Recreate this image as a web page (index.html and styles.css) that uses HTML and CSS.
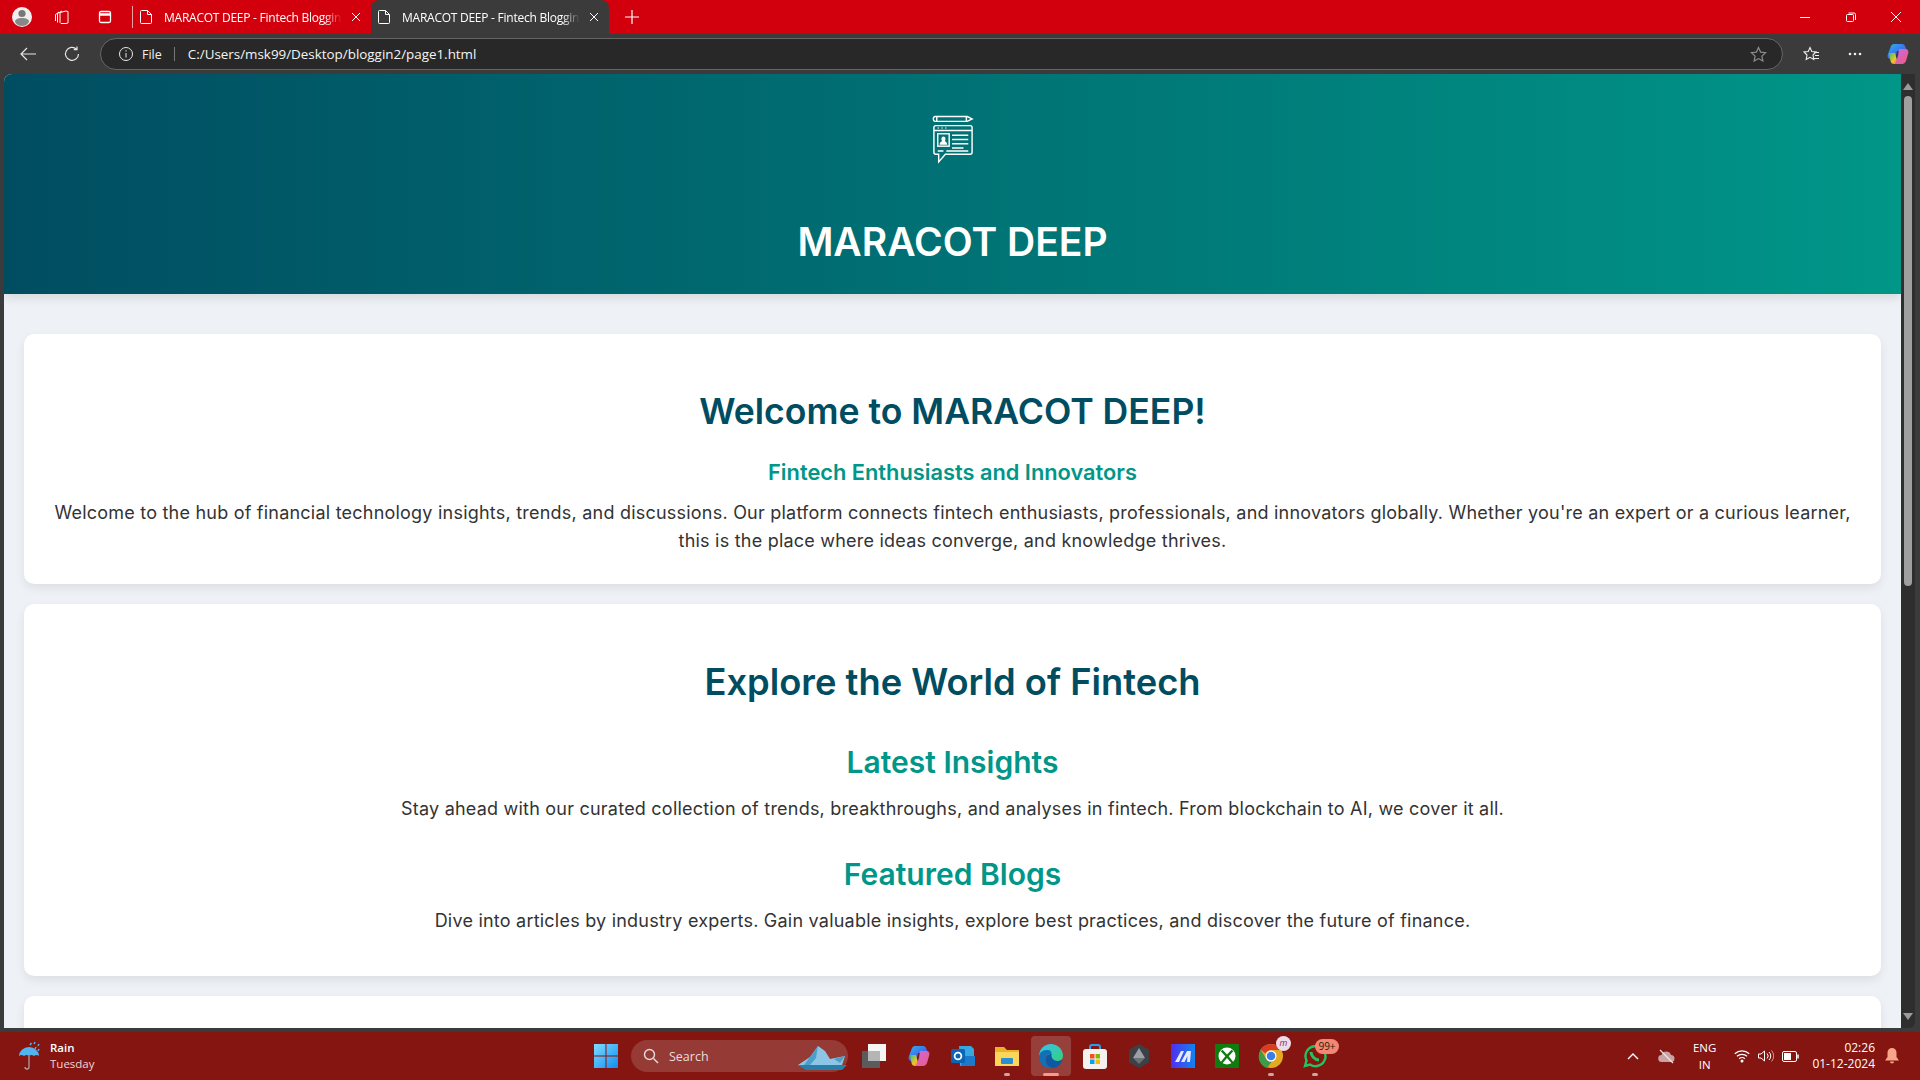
FILE: index.html
```html
<!DOCTYPE html>
<html lang="en">
<head>
<meta charset="utf-8">
<title>MARACOT DEEP - Fintech Blogging</title>
<link rel="stylesheet" href="styles.css">
</head>
<body>
<div class="tabstrip">
  <div class="avatar"><svg width="28" height="28" viewBox="0 0 28 28"><circle cx="14" cy="14" r="10" fill="#f1eeee"/><circle cx="14" cy="10.5" r="3.6" fill="#777"/><path d="M7 19c0-3 3-4 7-4s7 1 7 4c-2 3-4 4-7 4s-5-1-7-4z" fill="#888"/></svg></div>
  <svg class="ticon t-coll" width="18" height="18" viewBox="0 0 18 18" fill="none" stroke="#fff"><path d="M7 4.500l6-1.500 2 .5v11.500l-2 .5H8l-1-1z"/><path d="M4.500 14.500V5.500L9 3M2.500 13V6.500L6 4"/></svg>
  <svg class="ticon t-vert" width="16" height="16" viewBox="0 0 16 16" fill="none" stroke="#fff" stroke-width="1.300"><rect x="2.500" y="2.500" width="11" height="11" rx="1.500"/><path d="M2.500 5.500h11" stroke-width="2.500"/></svg>
  <span class="tabsep"></span>
  <div class="tab">
    <svg class="docicon" width="12" height="14" viewBox="0 0 12 14" fill="none" stroke="#fff"><path d="M1.500.500h6l4 4v8a1 1 0 0 1-1 1h-9a1 1 0 0 1-1-1v-11a1 1 0 0 1 1-1zM7.500.500v4h4"/></svg>
    <span class="tabtitle">MARACOT DEEP - Fintech Bloggin</span>
    <svg class="tabx" width="10" height="10" viewBox="0 0 10 10" stroke="#fff"><path d="M1 1l8 8M9 1l-8 8"/></svg>
  </div>
  <div class="tab active">
    <svg class="docicon" width="12" height="14" viewBox="0 0 12 14" fill="none" stroke="#fff"><path d="M1.500.500h6l4 4v8a1 1 0 0 1-1 1h-9a1 1 0 0 1-1-1v-11a1 1 0 0 1 1-1zM7.500.500v4h4"/></svg>
    <span class="tabtitle">MARACOT DEEP - Fintech Bloggin</span>
    <svg class="tabx" width="10" height="10" viewBox="0 0 10 10" stroke="#fff"><path d="M1 1l8 8M9 1l-8 8"/></svg>
  </div>
  <svg class="newtab" width="14" height="14" viewBox="0 0 14 14" stroke="#fff" stroke-width="1.200"><path d="M7 0v14M0 7h14"/></svg>
  <div class="winctrl">
    <svg width="10" height="10" viewBox="0 0 10 10" stroke="#fff"><path d="M0 5.500h10"/></svg>
    <svg width="10" height="10" viewBox="0 0 10 10" fill="none" stroke="#fff"><rect x=".5" y="2.500" width="7" height="7" rx="1"/><path d="M2.500 1h5.500a1.500 1.500 0 0 1 1.500 1.500V8"/></svg>
    <svg width="10" height="10" viewBox="0 0 10 10" stroke="#fff"><path d="M0 0l10 10M10 0L0 10"/></svg>
  </div>
</div>
<div class="toolbar">
  <svg class="navicon nav-back" width="16" height="14" viewBox="0 0 16 14" fill="none" stroke="#e8e8e8" stroke-width="1.200"><path d="M16 7H1M7 1L1 7l6 6"/></svg>
  <svg class="navicon nav-reload" width="16" height="16" viewBox="0 0 16 16" fill="none" stroke="#e8e8e8" stroke-width="1.200"><path d="M12.500 3.200A6.500 6.500 0 1 0 14.500 8M13 .5v3.200H9.800"/></svg>
  <div class="addressbar">
    <svg width="16" height="16" viewBox="0 0 16 16" fill="none" stroke="#e8e8e8"><circle cx="8" cy="8" r="6.500"/><path d="M8 7v4.500M8 4.200v1.300"/></svg>
    <span class="scheme">File</span>
    <span class="addrsep"></span>
    <span class="url">C:/Users/msk99/Desktop/bloggin2/page1.html</span>
    <svg class="star" width="17" height="17" viewBox="0 0 17 17" fill="none" stroke="#8c8c8c" stroke-width="1.200"><path d="M8.500 1.500l2.100 4.600 5 .6-3.700 3.400 1 5-4.400-2.500-4.400 2.500 1-5L1.400 6.700l5-.6z"/></svg>
  </div>
  <svg class="favs" width="17" height="17" viewBox="0 0 17 17" fill="none" stroke="#f0f0f0" stroke-width="1.100"><path d="M7 1.500l1.800 4 4.200.5-3 3 .8 4.500L7 11.300 3.200 13.500 4 9 1 6l4.200-.5zM11 6.500h5M12 9.500h4M11 12.500h5"/></svg>
  <svg class="dots" width="14" height="4" viewBox="0 0 14 4" fill="#f0f0f0"><circle cx="2" cy="2" r="1.300"/><circle cx="7" cy="2" r="1.300"/><circle cx="12" cy="2" r="1.300"/></svg>
  <svg class="copilot" width="24" height="24" viewBox="0 0 24 24"><defs><linearGradient id="cpa" x1="0" y1="0" x2="1" y2="1"><stop offset="0" stop-color="#2fb5e8"/><stop offset=".55" stop-color="#3b6ff0"/><stop offset="1" stop-color="#8a4de8"/></linearGradient><linearGradient id="cpb" x1="0" y1="0" x2="1" y2="1"><stop offset="0" stop-color="#35c26b"/><stop offset=".6" stop-color="#f2c230"/><stop offset="1" stop-color="#f06a3a"/></linearGradient><linearGradient id="cpc" x1="0" y1="0" x2="1" y2="1"><stop offset="0" stop-color="#c86ae8"/><stop offset="1" stop-color="#f05a7a"/></linearGradient></defs><path d="M8 2h8c2 0 2.500 1 3 2l2 5H11l-2 8H5c-3 0-4-2-3-5l3-8c.5-1 1.500-2 3-2z" fill="url(#cpa)"/><path d="M3 11h6l3 11H8c-2 0-3-1-3.500-3z" fill="url(#cpb)"/><path d="M13 7h6c3 0 4 2 3 5l-2 7c-1 2-2 3-4 3H9l3-8z" fill="url(#cpc)"/></svg>
</div>
<div class="viewport">
  <div class="page">
    <header class="site-header">
      <svg class="logo" width="42" height="50" viewBox="0 0 44 52" fill="none" stroke="#fff" stroke-width="1.500">
        <path d="M3 2.500h34l5 2.500-5 2.500H3a2 2 0 0 1-1.500-2.500A2 2 0 0 1 3 2.500zM5 2.500v5M36 2.500v5"/>
        <path d="M4 12h36a2 2 0 0 1 2 2v26a2 2 0 0 1-2 2H14l-7 8v-8H4a2 2 0 0 1-2-2V14a2 2 0 0 1 2-2z"/>
        <path d="M2 17h40"/>
        <path d="M6 14.500h1M10 14.500h1M14 14.500h1"/>
        <rect x="6" y="20.500" width="12" height="13"/>
        <path d="M8 32c0-3 2-3 2.500-4-1-1-1-4.500 1.500-4.500s2.500 3.500 1.500 4.500c.5 1 2.500 1 2.500 4z" fill="#fff" stroke="none"/>
        <path d="M21 22h17M21 26.500h17M21 31h17M21 35.500h12M6 38.500h6M15 38.500h23"/>
      </svg>
      <div class="brand">MARACOT DEEP</div>
    </header>
    <main class="content">
      <section class="card card-welcome">
        <h1>Welcome to MARACOT DEEP!</h1>
        <h3>Fintech Enthusiasts and Innovators</h3>
        <p>Welcome to the hub of financial technology insights, trends, and discussions. Our platform connects fintech enthusiasts, professionals, and innovators globally. Whether you're an expert or a curious learner, this is the place where ideas converge, and knowledge thrives.</p>
      </section>
      <section class="card card-explore">
        <h1>Explore the World of Fintech</h1>
        <h2>Latest Insights</h2>
        <p>Stay ahead with our curated collection of trends, breakthroughs, and analyses in fintech. From blockchain to AI, we cover it all.</p>
        <h2>Featured Blogs</h2>
        <p>Dive into articles by industry experts. Gain valuable insights, explore best practices, and discover the future of finance.</p>
      </section>
      <section class="card card-next"></section>
    </main>
  </div>
  <div class="scrollbar">
    <span class="arrow-up"></span>
    <span class="thumb"></span>
    <span class="arrow-down"></span>
  </div>
</div>
<footer class="taskbar">
  <div class="weather">
    <svg width="26" height="30" viewBox="0 0 26 30"><path d="M1 15a10 9 0 0 1 20 0c-2-1.500-3-1.500-5 0-2-1.500-3-1.500-5 0-2-1.500-3-1.500-5 0-2-1.500-3-1.500-5 0z" fill="#54b4ee"/><path d="M11 15v11a2 2 0 0 1-4 0" fill="none" stroke="#a9a0a0" stroke-width="1.300"/><path d="M12 4l1.500-2M16 3l1-2M20 5l1-2M20 10l1-2M17 8l1-2" stroke="#54b4ee" stroke-width="1.500"/></svg>
    <div class="wtext"><span class="wmain">Rain</span><span class="wsub">Tuesday</span></div>
  </div>
  <div class="taskcenter">
    <svg class="start" width="24" height="24" viewBox="0 0 24 24"><defs><linearGradient id="win" x1="0" y1="0" x2="1" y2="1"><stop offset="0" stop-color="#7fdcff"/><stop offset="1" stop-color="#0f8df0"/></linearGradient></defs><path d="M0 0h11.500v11.500H0zM12.500 0H24v11.500H12.500zM0 12.500h11.500V24H0zM12.500 12.500H24V24H12.500z" fill="url(#win)"/></svg>
    <div class="search">
      <svg width="16" height="16" viewBox="0 0 16 16" fill="none" stroke="#e8dcdc" stroke-width="1.400"><circle cx="6.500" cy="6.500" r="5"/><path d="M10.500 10.500l4.500 4.500"/></svg>
      <span>Search</span>
      <svg class="berg" width="50" height="26" viewBox="0 0 50 26"><path d="M0 20L12 12 20 1l7 5 5 8 15-3-3 9-14 5H10z" fill="#8cc6e6"/><path d="M0 20h49l-5 5H8z" fill="#2a7fa8"/><path d="M20 1l-2 12-6 7H6l6-8zM36 14l6 4 5-7z" fill="#4d9fc9"/></svg>
    </div>
    <div class="tk"><svg width="26" height="24" viewBox="0 0 26 24"><rect y="7" width="18" height="17" fill="#5b5b5b"/><rect x="6" width="18" height="17" fill="#f4f4f4"/><rect x="6" y="7" width="12" height="10" fill="#b5b5b5"/></svg></div>
    <div class="tk"><svg width="24" height="24" viewBox="0 0 24 24"><path d="M8 2h8c2 0 2.500 1 3 2l2 5H11l-2 8H5c-3 0-4-2-3-5l3-8c.5-1 1.500-2 3-2z" fill="url(#cpa)"/><path d="M3 11h6l3 11H8c-2 0-3-1-3.500-3z" fill="url(#cpb)"/><path d="M13 7h6c3 0 4 2 3 5l-2 7c-1 2-2 3-4 3H9l3-8z" fill="url(#cpc)"/></svg></div>
    <div class="tk"><svg width="24" height="24" viewBox="0 0 24 24"><path d="M8 2h12l3 3v14l-3 3H9z" fill="#35a8e0"/><path d="M12 12h12v9a1 1 0 0 1-1 1H10z" fill="#1d79c9"/><rect x="0" y="5" width="14" height="14" rx="1.500" fill="#0a64b8"/><circle cx="7" cy="12" r="3.400" fill="none" stroke="#fff" stroke-width="1.800"/></svg></div>
    <div class="tk running"><svg width="24" height="24" viewBox="0 0 24 24"><path d="M0 3h9l3 3h12v16H0z" fill="#e9b22b"/><path d="M0 8h24v14H0z" fill="#fcd55a"/><rect x="6" y="14" width="12" height="6" rx="1" fill="#2a8ed4"/></svg></div>
    <div class="tk active"><svg width="26" height="26" viewBox="0 0 26 26"><defs><linearGradient id="edge1" x1="0" y1="0" x2="1" y2="1"><stop offset="0" stop-color="#35c1f1"/><stop offset="1" stop-color="#34d07a"/></linearGradient></defs><path d="M1 13a12 12 0 0 1 24 0c0 4-3 5-6 5-4 0-7-1-7-4 0-1 .5-2 1-2-6 0-10 4-12 1z" fill="url(#edge1)"/><path d="M1 13c1-5 5-6 9-6 2 0 3.500 1 3.500 4-4 0-6 2-6 6s3 7 7 8C7 26 1 21 1 13z" fill="#1170b8"/><path d="M8 17c0-4 2-6 5.500-6-.5 4 2 7 6 7 2 0 4-.5 5-2-1 5-5 9-10 9-4-1-6.500-4-6.500-8z" fill="#0c59a4"/></svg></div>
    <div class="tk"><svg width="24" height="25" viewBox="0 0 24 25"><path d="M7 6V3a2 2 0 0 1 2-2h6a2 2 0 0 1 2 2v3" fill="none" stroke="#27a1e8" stroke-width="2"/><rect y="5" width="24" height="20" rx="3" fill="#f4f1ef"/><path d="M7 10h4.500v4.500H7z" fill="#f25022"/><path d="M12.500 10H17v4.500h-4.500z" fill="#7fba00"/><path d="M7 15.500h4.500V20H7z" fill="#00a4ef"/><path d="M12.500 15.500H17V20h-4.500z" fill="#ffb900"/></svg></div>
    <div class="tk"><svg width="22" height="24" viewBox="0 0 22 24"><path d="M11 0l10 5.500v13L11 24 1 18.500v-13z" fill="#3d4045"/><path d="M11 4l6 10H5z" fill="#9aa0a6"/><path d="M5 14h12l-6 6z" fill="#6b7075"/></svg></div>
    <div class="tk"><svg width="24" height="24" viewBox="0 0 24 24"><defs><linearGradient id="mm" x1="0" y1="0" x2="1" y2="0"><stop offset="0" stop-color="#4f2ff0"/><stop offset="1" stop-color="#1283f0"/></linearGradient></defs><rect width="24" height="24" fill="url(#mm)"/><path d="M4 18l6-11h3l-5 11zM10 18l6-11h4l-1 11h-3l.5-6-3 6z" fill="#e8e8ff"/></svg></div>
    <div class="tk"><svg width="24" height="24" viewBox="0 0 24 24"><rect width="24" height="24" rx="1" fill="#107c10"/><circle cx="12" cy="12" r="8.500" fill="#fff"/><path d="M12 10.500L7.500 5.800 5.800 7.300l4.600 5-4.900 6 1.600 1.400L12 14l5 5.700 1.500-1.400-4.800-6 4.600-5-1.700-1.500z" fill="#107c10"/></svg></div>
    <div class="tk running chrome"><svg width="26" height="26" viewBox="0 0 26 26"><circle cx="13" cy="13" r="12" fill="#e5a823"/><path d="M13 1a12 12 0 0 1 10.400 6H13a6 6 0 0 0-5.500 3.500L2.800 6.800A12 12 0 0 1 13 1z" fill="#d93b2b"/><path d="M2.800 6.800l5 8.500a6 6 0 0 0 5.700 3.700L9 25A12 12 0 0 1 2.800 6.800z" fill="#3f9b46"/><circle cx="13" cy="13" r="5.500" fill="#fff"/><circle cx="13" cy="13" r="4.300" fill="#3c7ee6"/></svg><span class="profile">m</span></div>
    <div class="tk running wa"><svg width="24" height="24" viewBox="0 0 24 24" fill="none" stroke="#25c35e" stroke-width="2.400"><path d="M2 22l1.500-5.500A10 10 0 1 1 7 20.500z"/><path d="M8 8c0 4 4 8 8 8" stroke-width="3"/></svg><span class="badge">99+</span></div>
  </div>
  <div class="tray">
    <svg class="chev" width="12" height="7" viewBox="0 0 12 7" fill="none" stroke="#fff" stroke-width="1.400"><path d="M1 6l5-5 5 5"/></svg>
    <svg class="cloud" width="17" height="15" viewBox="0 0 17 15"><path d="M4 13a3.500 3.500 0 0 1-.5-7A5 5 0 0 1 13 6a3.500 3.500 0 0 1 0 7z" fill="#c9a3a3"/><path d="M2 1l13 13" stroke="#f0e4e4" stroke-width="1.300"/></svg>
    <div class="lang"><span>ENG</span><span>IN</span></div>
    <svg width="16" height="14" viewBox="0 0 16 14" fill="none" stroke="#fff" stroke-width="1.200"><path d="M.8 4.800a10.500 10.500 0 0 1 14.400 0M3 7.300a7.300 7.300 0 0 1 10 0M5.200 9.700a4 4 0 0 1 5.600 0"/><circle cx="8" cy="12" r=".9" fill="#fff"/></svg>
    <svg width="16" height="14" viewBox="0 0 16 14" fill="none" stroke="#fff"><path d="M.5 5v4h2.500l3.500 3V2L3 5zM9 4.500a3.500 3.500 0 0 1 0 5M11 3a5.500 5.500 0 0 1 0 8"/><path d="M13.500 1.500a8 8 0 0 1 0 11" stroke="#c79a9a"/></svg>
    <svg width="17" height="11" viewBox="0 0 17 11" fill="none" stroke="#fff"><rect x=".5" y=".5" width="14" height="10" rx="1.500"/><rect x="2" y="2" width="7" height="7" fill="#fff" stroke="none"/><path d="M16 3.500v4" stroke-width="1.500"/></svg>
    <div class="clock"><span>02:26</span><span>01-12-2024</span></div>
    <svg class="bell" width="14" height="16" viewBox="0 0 14 16" fill="#f7a58b"><path d="M7 0a4.500 4.500 0 0 1 4.500 4.500V9l2.500 3.500H0L2.500 9V4.500A4.500 4.500 0 0 1 7 0zM5 13.500h4a2 2 0 0 1-4 0z"/></svg>
  </div>
</footer>
</body>
</html>
```
FILE: styles.css
```css
* { box-sizing: border-box; }
html, body { margin: 0; height: 100%; }
body {
  width: 1920px; height: 1080px; overflow: hidden;
  display: flex; flex-direction: column;
  background: #3b3b3b;
  font-family: "Open Sans", "Noto Sans", sans-serif;
}
.tabstrip {
  height: 34px; background: #d2000d; display: flex; align-items: center;
  color: #fff; flex: none; position: relative;
}
.avatar { width: 28px; margin-left: 8px; height: 28px; }
.ticon { flex: none; }
.t-coll { margin-left: 17px; }
.t-vert { margin-left: 26px; }
.tabsep { width: 1px; height: 22px; background: #f0a0a0; margin-left: 19px; }
.tab {
  width: 238px; height: 34px; display: flex; align-items: center;
  padding: 0 8px 0 7px; font-size: 12px; position: relative;
}
.tab.active { background: #3b3b3b; border-radius: 8px 8px 0 0; }
.docicon { flex: none; }
.tabtitle {
  margin-left: 12px; width: 178px; white-space: nowrap; letter-spacing: -.25px; color: #fff; flex: none;
  -webkit-mask-image: linear-gradient(90deg, #000 90%, transparent 100%);
  mask-image: linear-gradient(90deg, #000 90%, transparent 100%);
}
.tabx { margin-left: 9px; flex: none; }
.newtab { margin-left: 16px; }
.winctrl { margin-left: auto; display: flex; gap: 35.500px; padding-right: 19px; align-items: center; }
.toolbar {
  height: 40px; flex: none; background: #3b3b3b; display: flex; align-items: center; color: #eee;
}
.nav-back { margin-left: 20px; }
.nav-reload { margin-left: 28px; }
.addressbar {
  width: 1683px; height: 32px; margin-left: 20px; border: 1px solid #666; border-radius: 16px;
  background: #282828; display: flex; align-items: center; padding-left: 17px; font-size: 12.500px;
}
.scheme { margin-left: 8px; color: #f0f0f0; }
.addrsep { width: 1px; height: 14px; background: #777; margin-left: 12px; }
.url { margin-left: 13px; color: #f4f4f4; font-size: 13.400px; }
.star { margin-left: auto; margin-right: 15px; }
.favs { margin-left: 20px; }
.dots { margin-left: 28px; }
.copilot { margin-left: 24px; }
.viewport { height: 954px; flex: none; display: flex; padding-left: 4px; }
.page { width: 1897px; height: 954px; overflow: hidden; background: #eef1f5; border-radius: 8px 0 0 0; }
.site-header {
  height: 220px; background: linear-gradient(90deg, #004d61, #009688);
  display: flex; flex-direction: column; align-items: center; padding-top: 40px;
  box-shadow: 0 4px 10px rgba(0,0,0,.1); position: relative;
}
.logo { display: block; }
.brand {
  color: #fff; font-family: "Inter", sans-serif; font-weight: 600; font-size: 39px; line-height: 48px; margin-top: 54px;
}
.content { padding: 40px 20px 0; display: flex; flex-direction: column; gap: 20px; font-family: "Inter", sans-serif; text-align: center; }
.card { background: #fff; border-radius: 10px; box-shadow: 0 4px 10px rgba(0,0,0,.08); padding: 0 24px; flex: none; }
.card-welcome { height: 250px; padding-top: 55px; }
.card-explore { height: 372px; padding-top: 55px; }
.card-next { height: 100px; }
h1 { margin: 0; color: #004d61; font-size: 35.600px; line-height: 46px; font-weight: 600; }
.card-explore h1 { font-size: 36.300px; }
h2 { margin: 0; color: #009688; font-size: 30px; line-height: 40px; font-weight: 600; }
h3 { margin: 0; color: #009688; font-size: 21.800px; line-height: 28px; font-weight: 600; }
p { margin: 0; color: #333; font-size: 18px; line-height: 28px; font-weight: 400; letter-spacing: .22px; }
.card-welcome h3 { margin-top: 23px; }
.card-welcome p { margin-top: 13px; }
.card-explore h2:first-of-type { margin-top: 37px; }
.card-explore p { margin-top: 13px; }
.card-explore p + h2 { margin-top: 31px; }
.scrollbar {
  width: 14px; margin-right: 5px; flex: none; background: #2e2e2e; display: flex; flex-direction: column; align-items: center; padding-top: 9px; border-radius: 0 0 6px 0;
}
.arrow-up { width: 0; height: 0; border-left: 5px solid transparent; border-right: 5px solid transparent; border-bottom: 7px solid #9b9b9b; flex: none; }
.thumb { width: 8px; height: 490px; background: #9f9f9f; border-radius: 4px; margin-top: 6px; flex: none; }
.arrow-down { width: 0; height: 0; border-left: 5px solid transparent; border-right: 5px solid transparent; border-top: 7px solid #9b9b9b; margin-top: auto; margin-bottom: 8px; flex: none; }
.taskbar {
  flex: none; height: 48px; margin-top: 4px; background: #841510; display: flex; align-items: center; position: relative; color: #fff;
}
.weather { display: flex; align-items: center; margin-left: 18px; gap: 6px; width: 560px; }
.wtext { display: flex; flex-direction: column; font-size: 11.500px; line-height: 16px; }
.wmain { font-weight: 600; }
.wsub { color: #ecd6d4; }
.taskcenter { display: flex; align-items: center; }
.start { margin-left: 16px; }
.search {
  width: 217px; height: 32px; border-radius: 16px; background: #953a35; display: flex; align-items: center;
  padding-left: 12px; margin-left: 13px; font-size: 12.500px; color: #ecdcdc; position: relative;
}
.search span { margin-left: 10px; }
.berg { position: absolute; right: 0; top: 5px; }
.tk { width: 40px; height: 40px; margin-left: 4px; display: flex; align-items: center; justify-content: center; position: relative; border-radius: 4px; flex: none; }
.search + .tk { margin-left: 7px; }
.tk.active { background: #97403b; }
.tk.running::after, .tk.active::after { content: ""; position: absolute; bottom: 0; left: 17px; width: 6px; height: 3px; border-radius: 2px; background: #c9a6a4; }
.tk.active::after { left: 12px; width: 16px; background: #f59a8c; }
.profile { position: absolute; right: 0; top: 0; width: 15px; height: 15px; border-radius: 50%; background: #eedde8; color: #8a2a60; font-size: 9px; line-height: 13px; text-align: center; font-style: italic; }
.badge { position: absolute; right: -4px; top: 3px; height: 15px; width: 24px; border-radius: 8px; background: #f58671; color: #221; font-size: 10px; line-height: 15px; text-align: center; }
.tray { margin-left: auto; display: flex; align-items: center; padding-right: 21px; }
.cloud { margin-left: 19px; }
.lang { display: flex; flex-direction: column; font-size: 11.500px; line-height: 17px; text-align: center; margin: 0 18px 0 18px; }
.tray > svg + svg { margin-left: 8px; }
.tray > .cloud { margin-left: 19px; }
.clock { display: flex; flex-direction: column; align-items: flex-end; font-size: 12px; line-height: 16px; margin-left: 13px; }
.bell { margin-left: 10px; }
```
